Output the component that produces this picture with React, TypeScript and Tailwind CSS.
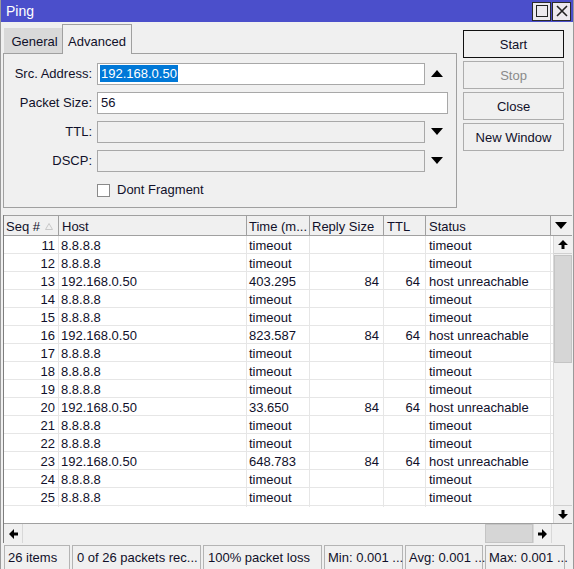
import React from "react";

const rows: [number, string, string, string, string, string][] = [
  [11, "8.8.8.8", "timeout", "", "", "timeout"],
  [12, "8.8.8.8", "timeout", "", "", "timeout"],
  [13, "192.168.0.50", "403.295", "84", "64", "host unreachable"],
  [14, "8.8.8.8", "timeout", "", "", "timeout"],
  [15, "8.8.8.8", "timeout", "", "", "timeout"],
  [16, "192.168.0.50", "823.587", "84", "64", "host unreachable"],
  [17, "8.8.8.8", "timeout", "", "", "timeout"],
  [18, "8.8.8.8", "timeout", "", "", "timeout"],
  [19, "8.8.8.8", "timeout", "", "", "timeout"],
  [20, "192.168.0.50", "33.650", "84", "64", "host unreachable"],
  [21, "8.8.8.8", "timeout", "", "", "timeout"],
  [22, "8.8.8.8", "timeout", "", "", "timeout"],
  [23, "192.168.0.50", "648.783", "84", "64", "host unreachable"],
  [24, "8.8.8.8", "timeout", "", "", "timeout"],
  [25, "8.8.8.8", "timeout", "", "", "timeout"],
];

const TriUp = () => (
  <svg width="12" height="7" viewBox="0 0 12 7">
    <path d="M6 0 L12 7 L0 7 Z" fill="#000" />
  </svg>
);
const TriDown = () => (
  <svg width="12" height="7" viewBox="0 0 12 7">
    <path d="M0 0 L12 0 L6 7 Z" fill="#000" />
  </svg>
);
const ArrowUp = () => (
  <svg width="10" height="9" viewBox="0 0 10 9">
    <path d="M5 0 L10 5 L6.5 5 L6.5 9 L3.5 9 L3.5 5 L0 5 Z" fill="#000" />
  </svg>
);
const ArrowDown = () => (
  <svg width="10" height="9" viewBox="0 0 10 9">
    <path d="M5 9 L10 4 L6.5 4 L6.5 0 L3.5 0 L3.5 4 L0 4 Z" fill="#000" />
  </svg>
);
const ArrowLeft = () => (
  <svg width="9" height="10" viewBox="0 0 9 10">
    <path d="M0 5 L5 0 L5 3.5 L9 3.5 L9 6.5 L5 6.5 L5 10 Z" fill="#000" />
  </svg>
);
const ArrowRight = () => (
  <svg width="9" height="10" viewBox="0 0 9 10">
    <path d="M9 5 L4 0 L4 3.5 L0 3.5 L0 6.5 L4 6.5 L4 10 Z" fill="#000" />
  </svg>
);

const cols = "grid grid-cols-[55px_188px_63px_74px_42px_125px]";

export default function App() {
  return (
    <div
      className="w-[574px] h-[569px] bg-[#f0f0f0] flex flex-col overflow-hidden text-[13px] text-[#10102a] border-l border-r border-[#9a9a9a]"
      style={{ fontFamily: '"Liberation Sans", Arial, sans-serif' }}
    >
      {/* Title bar */}
      <div className="h-[22px] bg-[#4b4fcb] flex items-center justify-between pl-[5px] pr-[2px] shrink-0">
        <span className="text-white text-[14px]">Ping</span>
        <div className="flex gap-[1px] items-center">
          <div className="w-[19px] h-[19px] bg-[#ece9ee] border border-[#2a2a2a] flex items-center justify-center">
            <div className="w-[12px] h-[12px] border-[1.5px] border-[#222]" />
          </div>
          <div className="w-[19px] h-[19px] bg-[#ece9ee] border border-[#2a2a2a] flex items-center justify-center">
            <svg width="12" height="12" viewBox="0 0 12 12">
              <path d="M1 1 L11 11 M11 1 L1 11" stroke="#222" strokeWidth="1.6" />
            </svg>
          </div>
        </div>
      </div>

      {/* Top region */}
      <div className="h-[193px] flex shrink-0">
        <div className="ml-[2px] w-[454px] flex flex-col">
          {/* Tabs */}
          <div className="h-[31px] flex items-end pl-[1px]">
            <div className="w-[58px] h-[25px] bg-[#d9d9d9] flex items-center justify-center pt-[3px] pl-[3px]">General</div>
            <div className="relative z-10 -mb-px w-[70px] h-[30px] bg-[#f0f0f0] border-t border-l border-r border-[#a0a0a0] flex items-start justify-center pt-[7px]">
              Advanced
            </div>
          </div>
          {/* Panel */}
          <div className="h-[155px] border border-[#a0a0a0] pt-[8px] flex flex-col gap-[7px]">
            <div className="flex items-center h-[22px] pt-[1px]">
              <div className="w-[88px] text-right">Src. Address:</div>
              <div className="ml-[5px] w-[328px] h-[22px] bg-white border border-[#a8a8a8] flex items-center pl-[2px]">
                <span className="bg-[#0078d7] text-white px-[1px] leading-[17px]">192.168.0.50</span>
              </div>
              <div className="w-[23px] flex justify-center">
                <TriUp />
              </div>
            </div>
            <div className="flex items-center h-[22px] pt-[1px]">
              <div className="w-[88px] text-right">Packet Size:</div>
              <div className="ml-[5px] w-[351px] h-[22px] bg-white border border-[#a8a8a8] flex items-center pl-[3px]">56</div>
            </div>
            <div className="flex items-center h-[22px] pt-[1px]">
              <div className="w-[88px] text-right">TTL:</div>
              <div className="ml-[5px] w-[328px] h-[22px] border border-[#a8a8a8]" />
              <div className="w-[23px] flex justify-center">
                <TriDown />
              </div>
            </div>
            <div className="flex items-center h-[22px] pt-[1px]">
              <div className="w-[88px] text-right">DSCP:</div>
              <div className="ml-[5px] w-[328px] h-[22px] border border-[#a8a8a8]" />
              <div className="w-[23px] flex justify-center">
                <TriDown />
              </div>
            </div>
            <div className="flex items-center h-[16px] mt-[4px] ml-[93px]">
              <div className="w-[13px] h-[13px] bg-white border border-[#8a8a8a]" />
              <span className="ml-[7px]">Dont Fragment</span>
            </div>
          </div>
        </div>
        {/* Buttons */}
        <div className="ml-[6px] mt-[8px] w-[101px] flex flex-col gap-[3px]">
          <div className="h-[28px] border border-[#111] bg-[#f0f0f0] flex items-center justify-center pt-[1px]">Start</div>
          <div className="h-[28px] border border-[#adadad] bg-[#f0f0f0] flex items-center justify-center pt-[1px] text-[#8a8a8a]">Stop</div>
          <div className="h-[28px] border border-[#adadad] bg-[#f0f0f0] flex items-center justify-center pt-[1px]">Close</div>
          <div className="h-[28px] border border-[#adadad] bg-[#f0f0f0] flex items-center justify-center pt-[1px]">New Window</div>
        </div>
      </div>

      {/* Table */}
      <div className="ml-[2px] w-[569px] flex flex-col border-l border-[#7e7e7e] shrink-0">
        {/* Header */}
        <div className="flex h-[21px] border-t border-b border-[#a0a0a0] bg-[#f0f0f0]">
          <div className={cols}>
            <div className="border-r border-[#a0a0a0] pl-[2px] pt-[1px] flex items-center">
              Seq #
              <svg width="8" height="7" viewBox="0 0 8 7" className="ml-[5px]">
                <path d="M4 0.5 L7.5 6.5 L0.5 6.5 Z" fill="none" stroke="#c8c8c8" strokeWidth="1" />
              </svg>
            </div>
            <div className="border-r border-[#a0a0a0] pl-[3px] pt-[1px] flex items-center">Host</div>
            <div className="border-r border-[#a0a0a0] pl-[2px] pt-[1px] flex items-center whitespace-nowrap overflow-hidden">Time (m...</div>
            <div className="border-r border-[#a0a0a0] pl-[2px] pt-[1px] flex items-center whitespace-nowrap">Reply Size</div>
            <div className="border-r border-[#a0a0a0] pl-[3px] pt-[1px] flex items-center">TTL</div>
            <div className="border-r border-[#a0a0a0] pl-[3px] pt-[1px] flex items-center">Status</div>
          </div>
          <div className="w-[19px] flex items-center justify-center">
            <TriDown />
          </div>
        </div>
        {/* Body */}
        <div className="flex h-[288px] border-b border-[#a0a0a0] bg-white">
          <div className="flex-1 flex flex-col">
            {rows.map((r) => (
              <div key={r[0]} className={`${cols} h-[18px] border-b border-[#e6e6e6]`}>
                <div className="border-r border-[#e6e6e6] text-right pr-[3px] leading-[19px]">{r[0]}</div>
                <div className="border-r border-[#e6e6e6] pl-[2px] leading-[19px]">{r[1]}</div>
                <div className="border-r border-[#e6e6e6] pl-[2px] leading-[19px]">{r[2]}</div>
                <div className="border-r border-[#e6e6e6] text-right pr-[4px] leading-[19px]">{r[3]}</div>
                <div className="border-r border-[#e6e6e6] text-right pr-[5px] leading-[19px]">{r[4]}</div>
                <div className="border-r border-[#e6e6e6] pl-[3px] leading-[19px] whitespace-nowrap">{r[5]}</div>
              </div>
            ))}
          </div>
          {/* Vertical scrollbar */}
          <div className="w-[19px] flex flex-col bg-[#f0f0f0] border-l border-[#d8d8d8]">
            <div className="h-[18px] flex items-center justify-center bg-[#f0f0f0] border-b border-[#d0d0d0]">
              <ArrowUp />
            </div>
            <div className="mt-[1px] h-[108px] bg-[#d6d6d6] border border-[#c4c4c4]" />
            <div className="flex-1" />
            <div className="h-[18px] flex items-center justify-center border-t border-[#d0d0d0]">
              <ArrowDown />
            </div>
          </div>
        </div>
        {/* Horizontal scrollbar */}
        <div className="flex h-[19px] bg-[#f0f0f0]">
          <div className="w-[19px] flex items-center justify-center border-r border-[#d8d8d8]">
            <ArrowLeft />
          </div>
          <div className="w-[462px]" />
          <div className="w-[48px] bg-[#d6d6d6] border border-[#c4c4c4]" />
          <div className="w-[19px] flex items-center justify-center border-l border-r border-[#d8d8d8]">
            <ArrowRight />
          </div>
          <div className="w-[19px]" />
        </div>
      </div>

      {/* Status bar */}
      <div className="mt-[2px] ml-[3px] flex gap-[2px] h-[24px] whitespace-nowrap">
        <div className="w-[66px] border-t border-l border-r border-[#b4b4b4] pl-[3px] flex items-center">26 items</div>
        <div className="w-[129px] border-t border-l border-r border-[#b4b4b4] pl-[4px] flex items-center">0 of 26 packets rec...</div>
        <div className="w-[119px] border-t border-l border-r border-[#b4b4b4] pl-[4px] flex items-center">100% packet loss</div>
        <div className="w-[79px] border-t border-l border-r border-[#b4b4b4] pl-[3px] flex items-center">Min: 0.001 ...</div>
        <div className="w-[78px] border-t border-l border-r border-[#b4b4b4] pl-[3px] flex items-center">Avg: 0.001 ...</div>
        <div className="w-[80px] border-t border-l border-r border-[#b4b4b4] pl-[3px] flex items-center">Max: 0.001 ...</div>
      </div>
    </div>
  );
}
